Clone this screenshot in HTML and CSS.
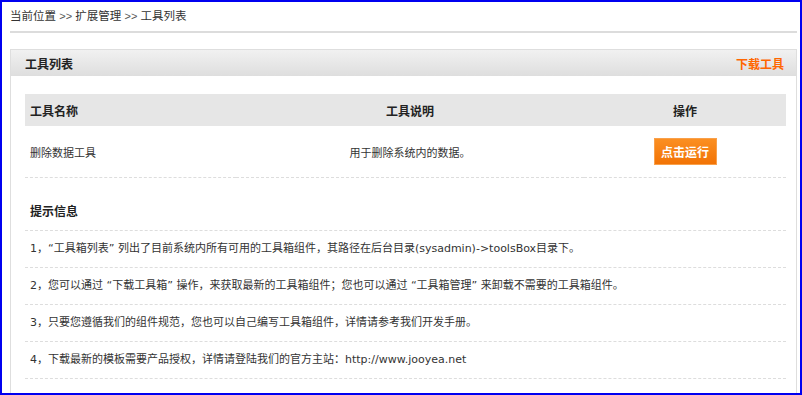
FILE: index.html
```html
<!DOCTYPE html>
<html>
<head>
<meta charset="utf-8">
<title>工具列表</title>
<link rel="stylesheet" href="styles.css">
</head>
<body>
<div class="frame">
    <div class="crumb">当前位置 <span class="sep">&gt;&gt;</span> 扩展管理 <span class="sep">&gt;&gt;</span> 工具列表</div>
    <div class="panel">
        <div class="panel-hd">
            <span class="panel-title">工具列表</span>
            <a class="panel-link" href="#">下载工具</a>
        </div>
        <div class="panel-bd">
            <table class="list">
                <tr>
                    <th class="c1">工具名称</th>
                    <th class="c2">工具说明</th>
                    <th class="c3">操作</th>
                </tr>
                <tr class="row">
                    <td class="c1">删除数据工具</td>
                    <td class="c2">用于删除系统内的数据。</td>
                    <td class="c3"><button class="run">点击运行</button></td>
                </tr>
            </table>
            <div class="tips">
                <div class="tips-title">提示信息</div>
                <div class="tip">1，“工具箱列表” 列出了目前系统内所有可用的工具箱组件，其路径在后台目录(sysadmin)-&gt;toolsBox目录下。</div>
                <div class="tip">2，您可以通过 “下载工具箱” 操作，来获取最新的工具箱组件；您也可以通过 “工具箱管理” 来卸载不需要的工具箱组件。</div>
                <div class="tip">3，只要您遵循我们的组件规范，您也可以自己编写工具箱组件，详情请参考我们开发手册。</div>
                <div class="tip">4，下载最新的模板需要产品授权，详情请登陆我们的官方主站：http://www.jooyea.net</div>
            </div>
        </div>
    </div>
</div>
</body>
</html>
```

FILE: styles.css
```css
*{
    margin: 0;
    padding: 0;
}
body{
    font-family: "Liberation Sans", "Noto Sans CJK SC", sans-serif;
    font-size: 12px;
    color: #333;
    background: #fff;
}
.frame{
    box-sizing: border-box;
    width: 802px;
    height: 395px;
    border: 2px solid #0000f0;
    padding: 0 3px 0 8px;
    overflow: hidden;
}
.crumb{
    height: 29px;
    line-height: 29px;
    font-size: 11.5px;
    border-bottom: 2px solid #dcdcdc;
}
.sep{
    font-size: 11px;
    color: #555;
}
.panel{
    margin-top: 16px;
    border: 1px solid #dedede;
    border-bottom: none;
    height: 400px;
}
.panel-hd{
    display: flex;
    justify-content: space-between;
    align-items: center;
    height: 26px;
    padding: 0 12px 0 14px;
    background: linear-gradient(#f1f1f1, #dedede);
}
.panel-title{
    font-weight: bold;
    color: #222;
}
.panel-link{
    font-weight: bold;
    color: #f60;
    text-decoration: none;
}
.panel-bd{
    padding: 18px 10px 0 14px;
}
.list{
    width: 100%;
    border-collapse: collapse;
}
.list th{
    height: 32px;
    background: #e6e6e6;
    color: #222;
    font-weight: bold;
}
.list td{
    height: 51px;
    font-size: 11px;
    border-bottom: 1px dashed #ddd;
}
.c1{
    width: 206px;
    padding-left: 5px;
    text-align: left;
}
.c2{
    width: 348px;
    text-align: center;
}
.c3{
    text-align: center;
}
.run{
    width: 63px;
    height: 27px;
    border: 1px solid #f9a04a;
    background: linear-gradient(#fb8f22, #f27305);
    color: #fff;
    font-family: inherit;
    font-size: 12px;
    font-weight: bold;
}
.tips-title{
    padding: 17px 0 0 5px;
    line-height: 35px;
    font-weight: bold;
    color: #222;
    border-bottom: 1px dashed #ddd;
}
.tip{
    padding-left: 5px;
    line-height: 36px;
    font-family: "DejaVu Sans", "Noto Sans CJK SC", sans-serif;
    font-size: 11px;
    border-bottom: 1px dashed #ddd;
}
```
